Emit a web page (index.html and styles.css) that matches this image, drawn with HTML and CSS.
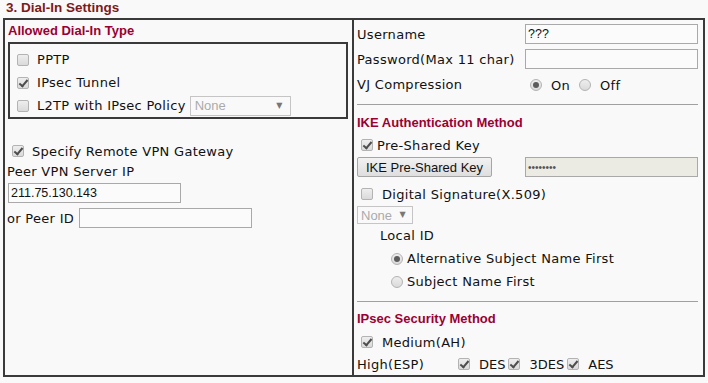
FILE: index.html
```html
<!DOCTYPE html>
<html lang="en">
  <head>
    <meta charset="UTF-8" />
    <title>Dial-In Settings</title>
    <link rel="stylesheet" href="styles.css">
  </head>
  <body>
    <div class="title">3. Dial-In Settings</div>

    <div class="panel">
      <div class="col left">
        <div class="sub">Allowed Dial-In Type</div>
        <div class="typebox">
          <label class="row"><input type="checkbox" class="cb" disabled /><span>PPTP</span></label>
          <label class="row"><input type="checkbox" class="cb" checked disabled /><span>IPsec Tunnel</span></label>
          <label class="row">
            <input type="checkbox" class="cb" disabled /><span>L2TP with IPsec Policy</span>
            <span class="sel wide"><select disabled><option>None</option></select></span>
          </label>
        </div>

        <label class="row gateway"><input type="checkbox" class="cb" checked disabled /><span>Specify Remote VPN Gateway</span></label>
        <div class="plain">Peer VPN Server IP</div>
        <div class="inrow"><input type="text" class="txt peer" value="211.75.130.143" /></div>
        <div class="inrow peerid"><span>or Peer ID</span><input type="text" class="txt peer" /></div>
      </div>

      <div class="col right">
        <div class="field first">
          <span class="lbl">Username</span>
          <input type="text" class="txt" value="???" />
        </div>
        <div class="field pass">
          <span class="lbl">Password(Max 11 char)</span>
          <input type="password" class="txt" />
        </div>
        <div class="field vj">
          <span class="lbl">VJ Compression</span>
          <span class="radios">
            <input type="radio" class="rd" name="vj" checked disabled /><span>On</span>
            <input type="radio" class="rd" name="vj" disabled /><span>Off</span>
          </span>
        </div>

        <div class="rule"></div>

        <div class="sub ike">IKE Authentication Method</div>
        <label class="row psk"><input type="checkbox" class="cb" checked disabled /><span>Pre-Shared Key</span></label>
        <div class="field keyrow">
          <span class="lbl"><button class="btn">IKE Pre-Shared Key</button></span>
          <input type="password" class="txt locked" value="keykeyke" disabled />
        </div>
        <label class="row digsig"><input type="checkbox" class="cb" disabled /><span>Digital Signature(X.509)</span></label>
        <div class="certrow"><span class="sel narrow"><select disabled><option>None</option></select></span></div>
        <div class="plain localid">Local ID</div>
        <label class="row idopt"><input type="radio" class="rd" name="lid" checked disabled /><span>Alternative Subject Name First</span></label>
        <label class="row idopt"><input type="radio" class="rd" name="lid" disabled /><span>Subject Name First</span></label>

        <div class="rule second"></div>

        <div class="sub ipsec">IPsec Security Method</div>
        <label class="row medium"><input type="checkbox" class="cb" checked disabled /><span>Medium(AH)</span></label>
        <div class="row high">
          <span class="hlbl">High(ESP)</span>
          <input type="checkbox" class="cb" checked disabled /><span class="alg">DES</span>
          <input type="checkbox" class="cb" checked disabled /><span class="alg">3DES</span>
          <input type="checkbox" class="cb" checked disabled /><span class="alg">AES</span>
        </div>
      </div>
    </div>
  </body>
</html>
```

FILE: styles.css
```css
* {
  box-sizing: border-box;
}

body {
  margin: 0;
  padding: 0;
  background-color: #f9f9f9;
  font-family: "DejaVu Sans", Verdana, sans-serif;
  font-size: 13px;
  letter-spacing: 0.3px;
  color: #111;
}

.title {
  height: 18px;
  line-height: 16px;
  padding-left: 6px;
  font-family: "Liberation Sans", Arial, sans-serif;
  font-weight: bold;
  font-size: 13.5px;
  letter-spacing: 0;
  color: #7d1a1a;
}

.panel {
  display: grid;
  grid-template-columns: 349px 1fr;
  width: 702px;
  height: 359px;
  margin-left: 3px;
  border: 2px solid #3a3a3a;
}

.col.left {
  border-right: 2px solid #3a3a3a;
}

.col.right {
  padding: 0 6px 0 3px;
}

.sub {
  height: 22px;
  line-height: 22px;
  padding-left: 3px;
  font-family: "Liberation Sans", Arial, sans-serif;
  font-weight: bold;
  font-size: 13px;
  letter-spacing: 0;
  color: #990033;
}

.row {
  display: flex;
  align-items: center;
  height: 23px;
}

.cb {
  appearance: none;
  -webkit-appearance: none;
  position: relative;
  flex: none;
  width: 12px;
  height: 12px;
  margin: 0;
  border: 1px solid #b3b3b3;
  border-radius: 2px;
  background: linear-gradient(#eeeeee, #dadada);
}

.cb:checked::after {
  content: "";
  position: absolute;
  left: 3px;
  top: 0;
  width: 3px;
  height: 7px;
  border: solid #4d4d4d;
  border-width: 0 2px 2px 0;
  transform: rotate(40deg);
}

.rd {
  appearance: none;
  -webkit-appearance: none;
  position: relative;
  flex: none;
  width: 12px;
  height: 12px;
  margin: 0;
  border: 1px solid #b3b3b3;
  border-radius: 50%;
  background: linear-gradient(#eeeeee, #dadada);
}

.rd:checked::after {
  content: "";
  position: absolute;
  left: 2px;
  top: 2px;
  width: 6px;
  height: 6px;
  border-radius: 50%;
  background: #5c5c5c;
}

/* left column */
.typebox {
  width: 340px;
  height: 77px;
  margin-left: 3px;
  padding-top: 4px;
  border: 2px solid #3a3a3a;
}

.typebox .row {
  padding-left: 7px;
}

.typebox .cb {
  margin-right: 8px;
}

.sel {
  position: relative;
  display: inline-block;
}

.sel select {
  appearance: none;
  -webkit-appearance: none;
  height: 20px;
  padding: 0 0 0 4px;
  border: 1px solid #b0b0b0;
  border-radius: 0;
  background: #f9f9f9;
  color: #8a8a8a;
  font-family: "Liberation Sans", Arial, sans-serif;
  font-size: 13px;
  letter-spacing: 0;
}

.sel::after {
  content: "\25BC";
  position: absolute;
  top: 5px;
  font-size: 8px;
  color: #777;
  pointer-events: none;
}

.sel.wide {
  margin-left: 4px;
}

.sel.wide select {
  width: 101px;
}

.sel.wide::after {
  right: 8px;
}

.sel.narrow select {
  width: 56px;
  height: 18px;
  padding-left: 3px;
}

.sel.narrow::after {
  top: 4px;
  right: 7px;
}

.gateway {
  height: 22px;
  margin-top: 21px;
  padding-left: 7px;
}

.gateway .cb {
  margin-right: 8px;
}

.plain {
  height: 20px;
  line-height: 20px;
  padding-left: 2px;
}

.inrow {
  display: flex;
  align-items: center;
  margin-top: 1px;
  padding-left: 3px;
  gap: 5px;
}

.inrow.peerid {
  margin-top: 5px;
  padding-left: 2px;
}

.txt {
  height: 20px;
  margin: 0;
  padding: 0 2px;
  border: 1px solid #a9a9a9;
  background: #fbfbfb;
  font-family: "Liberation Sans", Arial, sans-serif;
  font-size: 12.5px;
  letter-spacing: 0;
  color: #111;
}

.txt.peer {
  width: 173px;
}

/* right column */
.field {
  display: flex;
  align-items: center;
}

.field .lbl {
  width: 168px;
  flex: none;
}

.field .txt {
  width: 173px;
}

.field.first {
  height: 24px;
  margin-top: 2px;
}

.field.pass {
  height: 26px;
}

.field.vj {
  height: 24px;
}

.radios {
  display: flex;
  align-items: center;
  padding-left: 5px;
  padding-top: 2px;
}

.radios .rd {
  margin-right: 9px;
}

.radios span {
  margin-right: 9px;
}

.rule {
  height: 1px;
  margin-top: 8px;
  background: #a0a0a0;
}

.rule.second {
  margin-top: 8px;
}

.sub.ike {
  margin-top: 7px;
  padding-left: 0;
}

.psk {
  height: 22px;
  padding-left: 4px;
}

.psk .cb {
  margin-right: 4px;
}

.keyrow {
  height: 22px;
}

.btn {
  width: 135px;
  height: 20px;
  padding: 0;
  border: 1px solid #a6a6a6;
  border-radius: 2px;
  background: linear-gradient(#f2f2f2, #dedede);
  font-family: "Liberation Sans", Arial, sans-serif;
  font-size: 13px;
  letter-spacing: 0;
  color: #111;
}

.txt.locked {
  background: #ebebe4;
  color: #555;
  font-size: 10px;
}

.digsig {
  height: 22px;
  margin-top: 5px;
  padding-left: 4px;
}

.digsig .cb,
.medium .cb {
  margin-right: 9px;
}

.certrow {
  height: 18px;
  margin-top: 1px;
}

.plain.localid {
  height: 22px;
  line-height: 22px;
  margin-top: 1px;
  padding-left: 23px;
}

.idopt {
  padding-left: 34px;
}

.idopt .rd {
  margin-right: 4px;
}

.sub.ipsec {
  margin-top: 6px;
  padding-left: 0;
}

.medium {
  height: 22px;
  margin-top: 1px;
  padding-left: 4px;
}

.high {
  height: 22px;
}

.hlbl {
  width: 101px;
  flex: none;
}

.high .cb {
  margin-right: 9px;
}

.alg {
  margin-right: 3px;
  letter-spacing: 0;
}
```
